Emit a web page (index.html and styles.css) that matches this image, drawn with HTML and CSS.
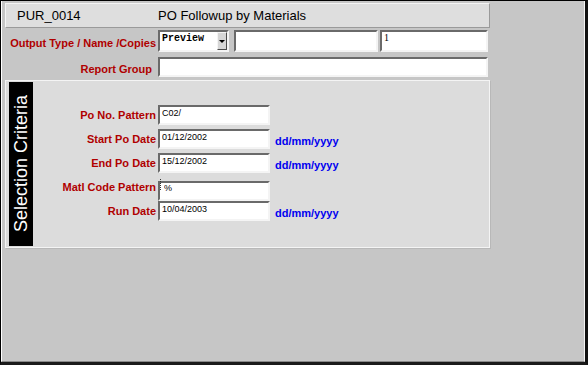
FILE: index.html
```html
<!DOCTYPE html>
<html>
<head>
<meta charset="utf-8">
<title>PO Followup by Materials</title>
<link rel="stylesheet" href="styles.css">
</head>
<body>
<div class="window">
  <div class="frame">
    <div class="titlebar">
      <span class="code">PUR_0014</span>
      <span class="title">PO Followup by Materials</span>
    </div>

    <div class="row row-output">
      <label class="lbl">Output Type / Name /Copies</label>
      <div class="controls">
        <div class="select">
          <span class="select-value">Preview</span>
          <span class="select-btn"><span class="arrow"></span></span>
        </div>
        <input class="tf tf-name" type="text" value="">
        <input class="tf tf-copies" type="text" value="1">
      </div>
    </div>

    <div class="row row-group">
      <label class="lbl lbl-group">Report Group</label>
      <input class="tf tf-group" type="text" value="">
    </div>

    <div class="panel">
      <div class="strip"><span class="strip-text">Selection Criteria</span></div>
      <div class="fields">
        <label class="lbl">Po No. Pattern</label>
        <input class="tf tf-crit" type="text" value="C02/">
        <span class="hint"></span>

        <label class="lbl">Start Po Date</label>
        <input class="tf tf-crit" type="text" value="01/12/2002">
        <span class="hint">dd/mm/yyyy</span>

        <label class="lbl">End Po Date</label>
        <input class="tf tf-crit" type="text" value="15/12/2002">
        <span class="hint">dd/mm/yyyy</span>

        <label class="lbl">Matl Code Pattern</label>
        <div class="tf-wrap">
          <input class="tf tf-crit tf-focus" type="text" value="%">
          <span class="caret"></span>
        </div>
        <span class="hint"></span>

        <label class="lbl">Run Date</label>
        <input class="tf tf-crit" type="text" value="10/04/2003">
        <span class="hint">dd/mm/yyyy</span>
      </div>
    </div>
  </div>
</div>
</body>
</html>
```

FILE: styles.css
```css
html, body {
  margin: 0;
  padding: 0;
  background: #c6c6c6;
}

body {
  font-family: "Liberation Sans", Arial, sans-serif;
  color: #000;
}

.window {
  width: 588px;
  height: 365px;
  box-sizing: border-box;
  background: #c6c6c6;
  border-top: 1px solid #000;
  border-left: 1px solid #000;
  border-right: 3px solid #111;
  border-bottom: 3px solid #1a1a1a;
}

.frame {
  height: 100%;
  box-sizing: border-box;
  border-left: 1px solid #fff;
  border-right: 1px solid #f4f4f4;
  border-bottom: 1px solid #8a8a8a;
  padding: 2px 0 0 3px;
}

/* title bar */
.titlebar {
  width: 485px;
  height: 25px;
  box-sizing: border-box;
  background: #dedede;
  border: 1px solid;
  border-color: #f4f4f4 #9a9a9a #9a9a9a #f4f4f4;
  display: flex;
  align-items: center;
  padding-left: 11px;
  font-size: 13px;
}

.code {
  width: 141px;
}

/* top rows */
.row {
  display: grid;
  grid-template-columns: 151px auto;
  column-gap: 2px;
  align-items: center;
}

.row-output {
  margin-top: 2px;
  height: 22px;
}

.row-group {
  margin-top: 5px;
  height: 20px;
}

.lbl {
  color: #b00000;
  font-weight: bold;
  font-size: 11px;
  text-align: right;
  white-space: nowrap;
}

.row .lbl {
  padding-top: 4px;
}

.row .lbl-group {
  padding-right: 4px;
}

.controls {
  display: flex;
  align-items: center;
  height: 22px;
}

.select {
  width: 71px;
  height: 22px;
  box-sizing: border-box;
  display: flex;
  background: #fff;
  border: 2px solid;
  border-color: #6a6a6a #f4f4f4 #f4f4f4 #6a6a6a;
}

.select-value {
  flex: 1;
  font: bold 10px "Liberation Mono", "Courier New", monospace;
  padding: 1px 0 0 2px;
}

.select-btn {
  width: 10px;
  box-sizing: border-box;
  background: #d6d6d6;
  border: 1px solid;
  border-color: #f4f4f4 #4a4a4a #4a4a4a #f4f4f4;
  display: flex;
  align-items: center;
  justify-content: center;
}

.arrow {
  width: 0;
  height: 0;
  border-left: 3px solid transparent;
  border-right: 3px solid transparent;
  border-top: 3px solid #000;
}

.tf {
  box-sizing: border-box;
  height: 20px;
  margin: 0;
  border: 2px solid;
  border-color: #6a6a6a #f4f4f4 #f4f4f4 #6a6a6a;
  background: #fff;
  padding: 0 2px 5px 2px;
  font: 9px "Liberation Sans", Arial, sans-serif;
  color: #000;
  outline: none;
}

.tf-name {
  width: 144px;
  height: 22px;
  margin-left: 5px;
}

.tf-copies {
  width: 108px;
  height: 22px;
  margin-left: 2px;
  font: 10px "Liberation Serif", "Times New Roman", serif;
  padding-bottom: 7px;
}

.tf-group {
  width: 330px;
}

/* selection criteria panel */
.panel {
  margin-top: 3px;
  width: 485px;
  height: 168px;
  box-sizing: border-box;
  background: #dcdcdc;
  border: 1px solid #f4f4f4;
  box-shadow: 1px 1px 0 #b8b8b8;
  display: flex;
}

.strip {
  width: 24px;
  margin: 1px 0 1px 3px;
  background: #000;
  color: #fff;
  display: flex;
  align-items: center;
  justify-content: center;
}

.strip-text {
  writing-mode: vertical-rl;
  transform: rotate(180deg);
  font-size: 18px;
  white-space: nowrap;
}

.fields {
  display: grid;
  grid-template-columns: 123px 112px auto;
  grid-auto-rows: 20px;
  column-gap: 2px;
  row-gap: 4px;
  align-items: center;
  align-content: start;
  padding-top: 24px;
}

.tf-crit {
  width: 112px;
}

.tf-wrap {
  position: relative;
  height: 20px;
}

.tf-focus {
  padding-left: 4px;
}

.caret {
  position: absolute;
  left: 2px;
  top: 2px;
  height: 11px;
  border-left: 1px dotted #333;
}

.hint {
  color: #0000f0;
  font-weight: bold;
  font-size: 11px;
  padding: 3px 0 0 3px;
}
```
